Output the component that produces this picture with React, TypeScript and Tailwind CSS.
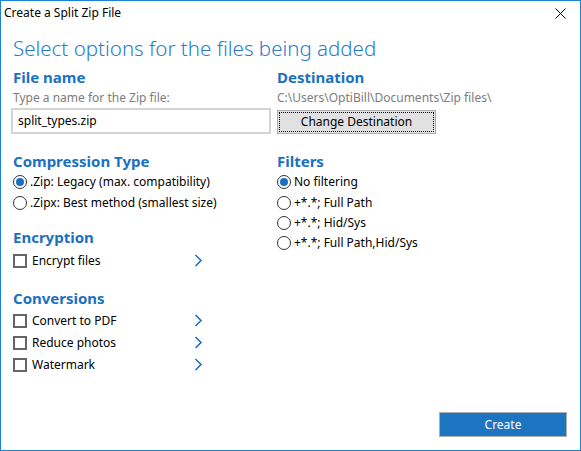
import React from "react";

const font = { fontFamily: '"Noto Sans", "Open Sans", sans-serif' };

const Radio = ({ checked, label }: { checked?: boolean; label: string }) => (
  <div className="flex items-center h-[20.4px] gap-[3px]">
    <span className="w-[14px] h-[14px] rounded-full border border-[#333] flex items-center justify-center bg-white">
      {checked && <span className="w-[8px] h-[8px] rounded-full bg-[#1b6ec2]" />}
    </span>
    <span className="text-[12px] text-black leading-none">{label}</span>
  </div>
);

const Chevron = () => (
  <svg width="9" height="13" viewBox="0 0 9 13">
    <polyline points="1.5,1 7,6.5 1.5,12" fill="none" stroke="#1d6fc0" strokeWidth="1.6" />
  </svg>
);

const Check = ({ label }: { label: string }) => (
  <div className="flex items-center h-[22px] w-[190px]">
    <span className="w-[14px] h-[14px] border-2 border-[#666] bg-white" />
    <span className="ml-[5px] text-[12px] text-black leading-none flex-1">{label}</span>
    <Chevron />
  </div>
);

const SectionTitle = ({ children }: { children: React.ReactNode }) => (
  <div className="text-[15px] font-bold text-[#1b70c1] leading-[20px]">{children}</div>
);

export default function App() {
  return (
    <div
      className="w-[581px] h-[451px] border border-[#1883d7] bg-white flex flex-col"
      style={font}
    >
      {/* Title bar */}
      <div className="h-[24px] flex items-center justify-between pl-[3px] pr-[14px]">
        <span className="text-[12px] text-black">Create a Split Zip File</span>
        <svg width="11" height="11" viewBox="0 0 11 11">
          <path d="M0.5 0.5 L10.5 10.5 M10.5 0.5 L0.5 10.5" stroke="#000" strokeWidth="1" />
        </svg>
      </div>

      <div className="flex-1 flex flex-col pl-[12px] pr-[13px]">
        <div className="mt-[9px] text-[20.5px] leading-[28px] text-[#2a7ccb] font-light">
          Select options for the files being added
        </div>

        <div className="grid grid-cols-[264px_1fr] mt-[5px]">
          {/* File name */}
          <div className="flex flex-col">
            <SectionTitle>File name</SectionTitle>
            <div className="text-[12px] leading-[16px] text-[#7d7d7d] mt-[3px]">
              Type a name for the Zip file:
            </div>
            <div className="mt-[2px] -ml-[2px] w-[260px] h-[26px] border-2 border-[#d4d4d4] flex items-center px-[5px] text-[12px] text-black">
              split_types.zip
            </div>
          </div>

          {/* Destination */}
          <div className="flex flex-col">
            <SectionTitle>Destination</SectionTitle>
            <div className="text-[12px] leading-[16px] text-[#7d7d7d] mt-[3px]">
              C:\Users\OptiBill\Documents\Zip files\
            </div>
            <div className="mt-[4px] w-[159px] h-[24px] border border-[#adadad] bg-[#e1e1e1] p-[1px]">
              <div className="w-full h-full border border-dotted border-black flex items-center justify-center text-[12px] text-black">
                Change Destination
              </div>
            </div>
          </div>

          {/* Compression Type */}
          <div className="flex flex-col mt-[17px]">
            <SectionTitle>Compression Type</SectionTitle>
            <div className="mt-[1px] flex flex-col">
              <Radio checked label=".Zip: Legacy (max. compatibility)" />
              <Radio label=".Zipx: Best method (smallest size)" />
            </div>
          </div>

          {/* Filters */}
          <div className="flex flex-col mt-[17px]">
            <SectionTitle>Filters</SectionTitle>
            <div className="mt-[1px] flex flex-col">
              <Radio checked label="No filtering" />
              <Radio label="+*.*; Full Path" />
              <Radio label="+*.*; Hid/Sys" />
              <Radio label="+*.*; Full Path,Hid/Sys" />
            </div>
          </div>
        </div>

        {/* Encryption */}
        <div className="flex flex-col -mt-[27px]">
          <SectionTitle>Encryption</SectionTitle>
          <div className="mt-[3px]">
            <Check label="Encrypt files" />
          </div>
        </div>

        {/* Conversions */}
        <div className="flex flex-col mt-[16px]">
          <SectionTitle>Conversions</SectionTitle>
          <div className="mt-[2px] flex flex-col">
            <Check label="Convert to PDF" />
            <Check label="Reduce photos" />
            <Check label="Watermark" />
          </div>
        </div>

        <div className="flex-1" />
        <div className="flex justify-end pb-[13px]">
          <button className="w-[128px] h-[25px] bg-[#1b75c1] border border-[#adadad] text-white text-[12px]">
            Create
          </button>
        </div>
      </div>
    </div>
  );
}
